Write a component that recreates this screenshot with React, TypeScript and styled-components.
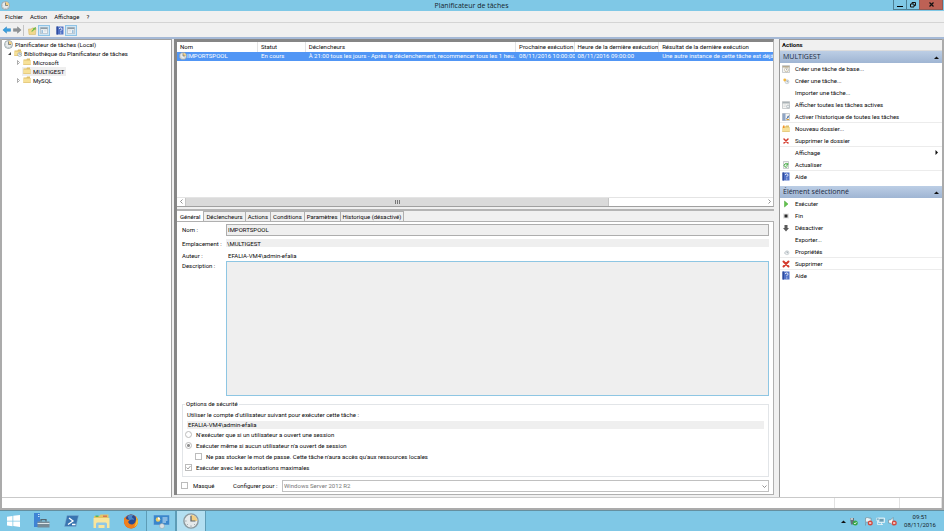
import React from "react";
import styled, { createGlobalStyle, css } from "styled-components";

const Global = createGlobalStyle`
  *, *::before, *::after { box-sizing: border-box; }
  html, body { margin: 0; padding: 0; }
  body { background: #f0f0f0; color: #080808; font: 6px/9px Roboto, "Open Sans", sans-serif; }
  button, input, select, textarea { font: inherit; color: inherit; margin: 0; padding: 0; border-radius: 0; }
  button { background: none; border: 0; }
  svg { display: block; flex: none; }
`;

/* ---------- frame ---------- */

const Screen = styled.div`
  display: flex;
  flex-direction: column;
  height: 100vh;
  min-height: 480px;
  overflow: hidden;
`;

const TitleBar = styled.header`
  display: grid;
  grid-template-columns: 1fr auto 1fr;
  height: 11px;
  flex: none;
  padding: 0 1px 0 0;
  background: #7fc8e6;
  svg { margin-left: 1px; margin-top: 1px; }
`;

const Title = styled.h1`
  margin: 0;
  font-family: "Open Sans", sans-serif;
  font-size: 7px;
  font-weight: 400;
  line-height: 12px;
  color: #16242b;
`;

const WindowButtons = styled.div`
  display: flex;
  justify-self: end;
  height: 10px;
`;

const WindowButton = styled.button<{ $close?: boolean }>`
  display: grid;
  place-items: center;
  width: ${(p) => (p.$close ? 24 : 14)}px;
  border: 1px solid #4d7f94;
  border-top: 0;
  margin-left: -1px;
  background: ${(p) => (p.$close ? "#bd6155" : "transparent")};
  ${(p) => p.$close && css`border-color: #8e5a55;`}
  svg { margin: 0; }
`;

const MenuBar = styled.nav`
  display: flex;
  align-items: flex-start;
  gap: 7px;
  flex: none;
  height: 12px;
  padding: 1px 5px 0;
  border-bottom: 1px solid #d4d4d4;
`;

const ToolBar = styled.div`
  display: flex;
  align-items: center;
  flex: none;
  height: 14px;
  padding: 0 1px;
`;

const ToolButton = styled.button<{ $on?: boolean }>`
  display: grid;
  place-items: center;
  width: ${(p) => (p.$on ? 12 : 11)}px;
  height: 11px;
  border: 1px solid ${(p) => (p.$on ? "#8fc3e6" : "transparent")};
  background: ${(p) => (p.$on ? "#cfe6f5" : "transparent")};
`;

const ToolDivider = styled.span<{ $clear?: boolean }>`
  width: 1px;
  height: 11px;
  background: ${(p) => (p.$clear ? "transparent" : "#c4c4c4")};
  & + button { margin-left: 3px; }
`;

const Body = styled.main`
  display: grid;
  grid-template-columns: minmax(120px, 170fr) minmax(380px, 603fr) minmax(130px, 163fr);
  column-gap: 2px;
  flex: 1;
  min-height: 0;
  padding: 0 2px;
  border-top: 2px solid #a5b9d6;
  background: linear-gradient(90deg, #ababab 2px, #f0f0f0 2px, #f0f0f0 calc(100% - 2px), #ababab calc(100% - 2px));
`;

const StatusBar = styled.footer`
  display: grid;
  grid-template-columns: 1fr 65px 42px;
  flex: none;
  height: 13px;
  padding-top: 1px;
  border: solid #ababab;
  border-width: 0 2px 2px;
  background: #c9c9c9;
`;

const StatusCell = styled.span`
  background: #fff;
  border-right: 1px solid #e2e2e2;
`;

/* ---------- tree ---------- */

const TreePanel = styled.aside`
  background: #fff;
  border: solid #a0a0a0;
  border-width: 1px 1px 0 0;
  min-width: 0;
`;

const Tree = styled.ul`
  list-style: none;
  margin: 0;
  padding: 0;
`;

const TreeRow = styled.li<{ $level: number }>`
  display: flex;
  align-items: center;
  height: 9px;
  line-height: 7px;
  padding-left: ${(p) => [1, 4, 13][p.$level]}px;
`;

const Toggle = styled.button`
  display: grid;
  place-items: center;
  width: 6px;
  height: 9px;
  margin-right: 1px;
`;

const TreeLabel = styled.span<{ $selected?: boolean }>`
  display: flex;
  align-items: center;
  gap: 2px;
  height: 9px;
  padding: 0 2px 1px 1px;
  white-space: nowrap;
  background: ${(p) => (p.$selected ? "#efefef" : "transparent")};
`;

/* ---------- task list ---------- */

const Center = styled.section`
  display: flex;
  flex-direction: column;
  min-width: 0;
  min-height: 0;
  border-left: 3px solid #868686;
  margin: 0 3px 2px 0;
`;

const ListPane = styled.div`
  display: flex;
  flex-direction: column;
  flex: 166 1 0;
  min-height: 0;
  border: solid #868686;
  border-width: 3px 1px 1px 0;
  border-bottom-color: #a0a0a0;
  border-right-color: #b4b4b4;
  background: #fff;
`;

const ListScroll = styled.div`
  flex: 1;
  min-height: 0;
  overflow: hidden;
`;

const TaskTable = styled.table`
  width: 100%;
  table-layout: fixed;
  border-collapse: separate;
  border-spacing: 0;
  th, td {
    padding: 0 0 1px 3px;
    line-height: 8px;
    text-align: left;
    font-weight: 400;
    white-space: nowrap;
    overflow: hidden;
  }
  th { height: 10px; border-right: 1px solid #e3e3e3; }
  th:last-child { border-right: 0; }
  td { height: 9px; background: #5196f5; color: #fff; }
  td:first-child { padding-left: 2px; }
`;

const Col = styled.col<{ $w?: number }>`
  width: ${(p) => (p.$w ? `${p.$w}%` : "auto")};
`;

const TaskName = styled.span`
  display: flex;
  align-items: center;
`;

const ScrollBar = styled.div`
  display: grid;
  grid-template-columns: 8px 424fr 156fr 8px;
  height: 9px;
  flex: none;
  border-top: 1px solid #e4e4e4;
  button { display: grid; place-items: center; background: #fff; }
`;

const Thumb = styled.span`
  display: grid;
  place-items: center;
  background: #dadada;
  border: solid #c6c6c6;
  border-width: 0 1px;
`;

/* ---------- details ---------- */

const DetailPane = styled.div`
  display: flex;
  flex-direction: column;
  flex: 288 1 0;
  min-height: 0;
  margin-top: 2px;
  border-top: 2px solid #b4b4b4;
`;

const Tabs = styled.div`
  display: flex;
  align-items: flex-end;
  flex: none;
  height: 10px;
`;

const Tab = styled.button<{ $active?: boolean }>`
  height: ${(p) => (p.$active ? 11 : 10)}px;
  padding: 0 ${(p) => (p.$active ? 3 : 2)}px;
  border: solid #b0b0b0;
  border-width: ${(p) => (p.$active ? "0 1px 0 0" : "1px 1px 0 0")};
  background: ${(p) => (p.$active ? "#fff" : "#f0f0f0")};
  line-height: 9px;
  margin-bottom: ${(p) => (p.$active ? -1 : 0)}px;
  white-space: nowrap;
`;

const TabPage = styled.form`
  display: flex;
  flex-direction: column;
  flex: 1;
  min-height: 0;
  padding: 2px 4px 2px 5px;
  background: #fff;
  border: solid #b0b0b0;
  border-width: 1px 1px 1px 0;
`;

const Fields = styled.div`
  display: grid;
  grid-template-columns: 44px 1fr;
  grid-template-rows: 12px 15px 10px 1fr;
  flex: 1;
  min-height: 0;
  label { align-self: center; white-space: nowrap; }
  label:last-of-type { align-self: start; }
`;

const TextField = styled.input<{ $kind: "box" | "band" | "plain" }>`
  width: 100%;
  min-width: 0;
  height: ${(p) => (p.$kind === "box" ? 12 : 8)}px;
  align-self: center;
  padding: 0 1px;
  border: ${(p) => (p.$kind === "box" ? "1px solid #adadad" : "0")};
  background: ${(p) => (p.$kind === "plain" ? "#fff" : "#efefef")};
  ${(p) => p.$kind === "plain" && css`padding-left: 2px;`}
`;

const Description = styled.textarea`
  width: 100%;
  height: 100%;
  resize: none;
  border: 1px solid #8ec6e3;
  background: #efefef;
`;

const Security = styled.fieldset`
  flex: none;
  min-width: 0;
  margin: 4px 0 0;
  padding: 2px 4px 3px 4px;
  border: 1px solid #e2e5e8;
  legend { padding: 0 1px; margin-left: -2px; line-height: 8px; }
  p { margin: 0; line-height: 10px; }
`;

const Option = styled.label<{ $indent?: boolean }>`
  display: flex;
  align-items: center;
  gap: 4px;
  height: 11px;
  padding-left: ${(p) => (p.$indent ? 10 : 0)}px;
  white-space: nowrap;
  margin-left: -2px;
`;

const Radio = styled.input.attrs({ type: "radio" })`
  appearance: none;
  width: 7px;
  height: 7px;
  border: 1px solid #bcbcbc;
  border-radius: 50%;
  &:checked { background: radial-gradient(circle, #8f8f8f 1px, #fff 2px); }
`;

const CheckBox = styled.input.attrs({ type: "checkbox" })`
  appearance: none;
  width: 7px;
  height: 7px;
  border: 1px solid #bcbcbc;
  background: #fff;
`;

const CheckHolder = styled.span`
  display: grid;
  width: 7px;
  height: 7px;
  > * { grid-area: 1 / 1; }
  svg { pointer-events: none; }
`;

const BottomRow = styled.div`
  display: flex;
  align-items: center;
  flex: none;
  margin-top: 3px;
  line-height: 7px;
  label { white-space: nowrap; padding-bottom: 1px; }
`;

const HiddenOption = styled.label`
  display: flex;
  align-items: center;
  gap: 5px;
  width: 52px;
  margin-left: -1px;
`;

const ConfigLabel = styled.label`
  width: 45px;
`;

const SelectHolder = styled.span`
  display: grid;
  flex: 1;
  align-items: center;
  margin-left: 4px;
  > * { grid-area: 1 / 1; }
  svg { justify-self: end; margin-right: 2px; pointer-events: none; }
`;

const Select = styled.select`
  appearance: none;
  width: 100%;
  height: 12px;
  padding: 0 0 1px 1px;
  border: 1px solid #c0c0c0;
  background: #fff;
  color: #777;
  opacity: 1;
`;

/* ---------- actions ---------- */

const ActionsPanel = styled.aside`
  min-width: 0;
  overflow: hidden;
  background: #fff;
  border: solid #9a9a9a;
  border-width: 1px 0 0 1px;
`;

const ActionsTitle = styled.h2`
  margin: 0;
  height: 11px;
  padding-left: 2px;
  font-size: 6px;
  font-weight: 700;
  line-height: 10px;
  background: #f0f0f0;
  border-bottom: 1px solid #dcdcdc;
`;

const GroupHead = styled.button`
  display: flex;
  align-items: center;
  justify-content: space-between;
  width: 100%;
  height: 12px;
  padding: 0 3px;
  background: linear-gradient(#bccee5, #9fb5d3);
  font-family: "Open Sans", sans-serif;
  font-size: 7px;
  line-height: 12px;
  color: #1a2940;
`;

const ActionList = styled.ul`
  list-style: none;
  margin: 0 0 3px;
  padding: 0;
`;

const ActionItem = styled.li<{ $line?: boolean }>`
  border-bottom: 1px solid ${(p) => (p.$line ? "#ececec" : "transparent")};
  height: 12px;
`;

const ActionButton = styled.button`
  display: grid;
  grid-template-columns: 9px 1fr auto;
  column-gap: 4px;
  align-items: center;
  width: 100%;
  height: 11px;
  padding: 0 3px 0 2px;
  text-align: left;
  white-space: nowrap;
`;

/* ---------- taskbar ---------- */

const TaskBar = styled.nav`
  display: flex;
  align-items: stretch;
  justify-content: space-between;
  flex: none;
  height: 21px;
  background: #7fc8e6;
  border-top: 1px solid #648f9f;
`;

const Apps = styled.div`
  display: flex;
`;

const AppButton = styled.button<{ $state?: "open" | "active" }>`
  display: grid;
  place-items: center;
  width: 30px;
  border: solid transparent;
  border-width: 0 1px;
  ${(p) => p.$state && css`border-color: #5d9cb6;`}
  background: ${(p) => (p.$state === "active" ? "#b3dff1" : p.$state === "open" ? "#88cce8" : "none")};
  &:first-child { width: 26px; }
`;

const Tray = styled.div`
  display: flex;
  align-items: center;
  gap: 3px;
  padding-right: 8px;
`;

const TrayGroup = styled.span`
  display: flex;
  gap: 3px;
  margin-left: 3px;
`;

const Clock = styled.time`
  margin-left: 4px;
  text-align: center;
  line-height: 8px;
  color: #16242b;
`;

/* ---------- icons ---------- */

const ClockIcon = ({ size = 9 }: { size?: number }) => (
  <svg width={size} height={size} viewBox="0 0 18 18">
    <circle cx="9" cy="9" r="8" fill="#e6eaeb" stroke="#8d9a9f" strokeWidth="1.6" />
    <path d="M9 9V2a7 7 0 0 1 7 7z" fill="#f2cf84" />
    <path d="M9 3v6h5" fill="none" stroke="#5b656a" strokeWidth="1.4" />
    <path d="M9 14v1.6M2.5 9H4M4.400 13.600l1-1M13.600 13.600l-1-1" stroke="#8c999e" />
  </svg>
);

const FolderIcon = ({ clock, sun }: { clock?: boolean; sun?: boolean }) => (
  <svg width="8" height="8" viewBox="0 0 16 16">
    <path d="M1 3h6l1-2h6v3h1v10H1z" fill="#dfc06b" />
    <path d="M1 5h14v9H1z" fill="#f7e198" />
    <path d="M1 13h14v1H1z" fill="#d6b76a" />
    {clock && <><circle cx="11.500" cy="11" r="4" fill="#eef2f5" stroke="#7990a0" /><path d="M11.500 8.500V11h2" stroke="#4e5d68" fill="none" /></>}
    {sun && <path d="M2 1h3v5H2z" fill="#f3932a" />}
  </svg>
);

const HelpIcon = () => (
  <svg width="8" height="9" viewBox="0 0 16 18">
    <path d="M1 1h14v16H1z" fill="#4f70c6" />
    <path d="M1 1h3v16H1z" fill="#2f4b9c" />
    <path d="M6.500 6c0-3 5.500-3 5.500 0 0 2-2.500 2-2.500 4.500M9.500 13v2" fill="none" stroke="#fff" strokeWidth="1.800" />
  </svg>
);

const ArrowIcon = ({ right }: { right?: boolean }) => (
  <svg width="9" height="8" viewBox="0 0 20 16">
    {right
      ? <path d="M1 5h9V1l8 7-8 7v-4H1z" fill="#8f9396" stroke="#74787b" />
      : <path d="M19 5h-9V1L2 8l8 7v-4h9z" fill="#3aa0e0" stroke="#2580bd" />}
  </svg>
);

const PaneIcon = ({ mark }: { mark: "left" | "right" }) => (
  <svg width="8" height="7" viewBox="0 0 18 16">
    <path d="M1 1h16v14H1z" fill="#f8fafb" stroke="#8b98a1" />
    <path d="M1 1h16v4H1z" fill="#8f9ca6" />
    <path d={mark === "left" ? "M3 7h4v7H3z" : "M11 7h4v7h-4z"} fill="#9cbfd9" />
    <path d={mark === "left" ? "M9 8h6M9 11h6" : "M3 8h6M3 11h6"} stroke="#b8c1c7" />
  </svg>
);

const UpFolderIcon = () => (
  <svg width="9" height="9" viewBox="0 0 18 18">
    <path d="M1 6h6l1-2h8l-1 13H2z" fill="#f0d88d" stroke="#cfb05d" />
    <path d="M6 11l4-4V5l6-3-1 6-2-1-4 4z" fill="#68b94a" />
  </svg>
);

const CrossIcon = ({ bold }: { bold?: boolean }) => (
  <svg width="8" height="8" viewBox="0 0 16 16">
    <path d={bold ? "M3 3l10 10M13 3L3 13" : "M4 4l8 8M12 4l-8 8"} stroke="#d43a2c" strokeWidth={bold ? 4 : 3} strokeLinecap="round" />
  </svg>
);

const SheetIcon = ({ kind }: { kind: "new" | "view" | "log" | "refresh" }) => (
  <svg width="8" height="8" viewBox="0 0 16 16">
    <path d={kind === "refresh" ? "M3 1h10v14H3z" : "M1 1h14v14H1z"} fill="#f4f4f2" stroke="#9da3a6" />
    {kind === "new" && <><path d="M1 2h14v3H1z" fill="#b6aa91" /><circle cx="9" cy="9.500" r="4" fill="#fff" stroke="#a69870" /><path d="M9 7v3h2" fill="none" stroke="#777" /></>}
    {kind === "view" && <><path d="M1 2h14v3H1z" fill="#aab2b6" /><circle cx="12" cy="11" r="3" fill="#e9eef0" stroke="#8f999e" /><path d="M3 8h5M3 11h4" stroke="#c3c9cc" /></>}
    {kind === "log" && <><path d="M1 1h6v14H1z" fill="#8fa5c5" /><path d="M9 12l5-7M10 8h4" stroke="#5577aa" strokeWidth="2" /><path d="M9 13h5" stroke="#d59d3c" strokeWidth="2" /></>}
    {kind === "refresh" && <path d="M11 7a3.500 3.500 0 1 0 0 3.500M11.500 4v4H8" fill="none" stroke="#43ad43" strokeWidth="2" />}
  </svg>
);

const TaskIcon = ({ grey }: { grey?: boolean }) => (
  <svg width="8" height="8" viewBox="0 0 16 16">
    <circle cx="10" cy="9.500" r="4" fill="#edf1f3" stroke={grey ? "#adb4b8" : "#a6b2bb"} />
    <path d="M10 6.500v3h2.500" fill="none" stroke="#6d7b85" />
    <circle cx="5.500" cy={grey ? 10 : 6} r={grey ? 1.5 : 2.8} fill={grey ? "#c8cdd0" : "#f2b640"} />
  </svg>
);

const PlayIcon = () => (
  <svg width="8" height="8" viewBox="0 0 16 16"><path d="M5 2l7 6-7 6z" fill="#62c34d" stroke="#48a537" /></svg>
);
const StopIcon = () => (
  <svg width="8" height="8" viewBox="0 0 16 16"><path d="M2 3h12v10H2z" fill="#e3e3e3" /><path d="M5 5h6v6H5z" fill="#2b2b2b" /></svg>
);
const DownIcon = () => (
  <svg width="8" height="8" viewBox="0 0 16 16"><path d="M5 2h6v6h3l-6 7-6-7h3z" fill="#5b5b5b" /></svg>
);

const Triangle = ({ dir }: { dir: "up" | "right" }) => (
  <svg width="5" height="5" viewBox="0 0 10 10">
    <path d={dir === "up" ? "M0 8l5-5 5 5z" : "M3 0l5 5-5 5z"} fill="#111" />
  </svg>
);

const Chevron = ({ dir }: { dir: "left" | "right" | "down" }) => (
  <svg width="5" height="5" viewBox="0 0 10 10">
    <path d={{ left: "M7 1L3 5l4 4", right: "M3 1l4 4-4 4", down: "M1 3l4 4 4-4" }[dir]} fill="none" stroke="#777" strokeWidth="1.600" />
  </svg>
);

const TreeArrow = ({ open }: { open?: boolean }) => (
  <svg width="5" height="5" viewBox="0 0 10 10">
    {open ? <path d="M8 2v6H2z" fill="#444" /> : <path d="M3 1l4 4-4 4z" fill="#fff" stroke="#8a8a8a" strokeWidth="1.400" />}
  </svg>
);

const StartIcon = () => (
  <svg width="13" height="12" viewBox="0 0 26 24">
    <path d="M0 3.500l11-1.600v9.600H0zM12.500 1.700L26 0v11.500H12.500zM0 13h11v9.500L0 21zM12.500 13H26v11l-13.500-1.800z" fill="#fff" />
  </svg>
);
const ServerIcon = () => (
  <svg width="17" height="16" viewBox="0 0 34 32">
    <path d="M2 0h12v28H2z" fill="#3f83d4" /><path d="M10 3h3M10 7h3" stroke="#c6e0f7" strokeWidth="2" />
    <path d="M9 17h24v12H9z" fill="#768a96" /><path d="M16 17v-4h10v4" fill="none" stroke="#54656f" strokeWidth="2.500" />
    <path d="M9 21h24" stroke="#dce6ea" strokeWidth="2" />
  </svg>
);
const ShellIcon = () => (
  <svg width="15" height="12" viewBox="0 0 30 24">
    <path d="M6 1h23l-5 22H1z" fill="#3975b1" stroke="#7faed3" />
    <path d="M10 6l8 6-10 7M16 19h7" fill="none" stroke="#fff" strokeWidth="2.600" />
  </svg>
);
const ExplorerIcon = () => (
  <svg width="17" height="15" viewBox="0 0 34 30">
    <path d="M2 4h11l2-3h16v26H2z" fill="#e5c464" /><path d="M5 3h6v3H5z" fill="#5bb65a" /><path d="M20 3h8v3h-8z" fill="#d77652" />
    <path d="M1 8h32v20H1z" fill="#f8e59c" /><path d="M6 29v-9q0-3 3-3h16q3 0 3 3v9h-5v-7H11v7z" fill="#8ec7e6" />
  </svg>
);
const FirefoxIcon = () => (
  <svg width="16" height="15" viewBox="0 0 32 30">
    <circle cx="16" cy="15" r="14" fill="#dd5a1b" /><circle cx="16" cy="11.500" r="10.500" fill="#284b92" />
    <path d="M9 4q6-4 12-2-4 2-3 5 4 1 4 5-5-2-9 1-3-4-4-9z" fill="#4a86c8" />
    <path d="M2 7q4 1 6 4l5 1-3 4q3 6 9 5 6-2 7-10l3 5q-1 11-12 13Q4 28 2 16z" fill="#ef7f1d" />
    <path d="M26 5q6 7 3 15-3 5-7 6 6-8 4-21z" fill="#f8c336" />
  </svg>
);
const ControlIcon = () => (
  <svg width="17" height="15" viewBox="0 0 34 30">
    <path d="M1 2h32v20H1z" fill="#3a86cb" stroke="#9bc8e8" />
    <circle cx="10" cy="11" r="4.500" fill="#f0ce65" /><path d="M10 11V6.500a4.500 4.500 0 0 1 4.500 4.500z" fill="#fff" />
    <path d="M19 8h10M19 12h10M19 16h7" stroke="#d5ecfa" strokeWidth="2" />
    <circle cx="18" cy="24" r="5" fill="#dbe1e4" stroke="#8c9ca5" />
  </svg>
);

const TrayIcon = ({ kind }: { kind: "usb" | "flag" | "net" | "sound" }) => (
  <svg width="9" height="9" viewBox="0 0 18 18">
    {kind === "usb" && <><path d="M2 2h8v13H4z" fill="#65717a" /><path d="M3 2h5v4H3z" fill="#c0c8cc" /><circle cx="12.500" cy="12" r="5" fill="#38a84b" /><path d="M10 12l2 2 3-4" fill="none" stroke="#fff" strokeWidth="1.500" /></>}
    {kind === "flag" && <path d="M3 17V2q4-2 7 0 2 1 4 0v8q-4 1-6 0H4" fill="#e9f2f6" stroke="#60717a" />}
    {kind === "net" && <><path d="M5 2h12v9H5z" fill="#a9d7e9" stroke="#f0f7fa" strokeWidth="1.500" /><path d="M1 2h5v5H1z" fill="#7fb4ca" stroke="#f0f7fa" /><path d="M3 7v8h11M11 11v4" fill="none" stroke="#eef6f9" strokeWidth="1.500" /><path d="M7 4h8v5H7z" fill="#6f9db1" /></>}
    {kind === "sound" && <path d="M1 6h4l5-5v16l-5-5H1z" fill="#f4f8fa" stroke="#60717a" />}
    {(kind === "flag" || kind === "sound") && <><circle cx="12.500" cy="12" r="5" fill="#d2493e" /><path d="M10.500 10l4 4M14.500 10l-4 4" stroke="#fff" strokeWidth="1.500" /></>}
  </svg>
);

/* ---------- data ---------- */

type Action = { label: string; icon?: React.ReactNode; line?: boolean; more?: boolean };

const folderActions: Action[] = [
  { label: "Créer une tâche de base...", icon: <SheetIcon kind="new" /> },
  { label: "Créer une tâche...", icon: <TaskIcon /> },
  { label: "Importer une tâche..." },
  { label: "Afficher toutes les tâches actives", icon: <SheetIcon kind="view" /> },
  { label: "Activer l'historique de toutes les tâches", icon: <SheetIcon kind="log" />, line: true },
  { label: "Nouveau dossier...", icon: <FolderIcon sun /> },
  { label: "Supprimer le dossier", icon: <CrossIcon />, line: true },
  { label: "Affichage", more: true },
  { label: "Actualiser", icon: <SheetIcon kind="refresh" />, line: true },
  { label: "Aide", icon: <HelpIcon /> },
];

const itemActions: Action[] = [
  { label: "Exécuter", icon: <PlayIcon /> },
  { label: "Fin", icon: <StopIcon /> },
  { label: "Désactiver", icon: <DownIcon /> },
  { label: "Exporter..." },
  { label: "Propriétés", icon: <TaskIcon grey />, line: true },
  { label: "Supprimer", icon: <CrossIcon bold />, line: true },
  { label: "Aide", icon: <HelpIcon /> },
];

const columns = [
  { label: "Nom", w: 13.6 },
  { label: "Statut", w: 8 },
  { label: "Déclencheurs", w: 35.3 },
  { label: "Prochaine exécution", w: 9.8 },
  { label: "Heure de la dernière exécution", w: 14.2 },
  { label: "Résultat de la dernière exécution" },
];

const tabs = ["Général", "Déclencheurs", "Actions", "Conditions", "Paramètres", "Historique (désactivé)"];

const ActionGroup = ({ title, items }: { title: string; items: Action[] }) => (
  <>
    <GroupHead>{title}<Triangle dir="up" /></GroupHead>
    <ActionList>
      {items.map((a) => (
        <ActionItem key={a.label} $line={a.line}>
          <ActionButton>
            <span>{a.icon}</span>
            {a.label}
            {a.more && <Triangle dir="right" />}
          </ActionButton>
        </ActionItem>
      ))}
    </ActionList>
  </>
);

export default function App() {
  return (
    <Screen>
      <Global />
      <TitleBar>
        <ClockIcon />
        <Title>Planificateur de tâches</Title>
        <WindowButtons>
          <WindowButton aria-label="Réduire"><svg width="6" height="6" viewBox="0 0 6 6"><path d="M0 4h6v1H0z" /></svg></WindowButton>
          <WindowButton aria-label="Restaurer"><svg width="6" height="6" viewBox="0 0 12 12"><path d="M1 4h7v6H1zM4 4V1h7v6H8" fill="none" stroke="#111" strokeWidth="2" /></svg></WindowButton>
          <WindowButton $close aria-label="Fermer"><svg width="5" height="5" viewBox="0 0 10 10"><path d="M1 1l8 8M9 1L1 9" stroke="#111" strokeWidth="2.400" /></svg></WindowButton>
        </WindowButtons>
      </TitleBar>
      <MenuBar>
        {["Fichier", "Action", "Affichage", "?"].map((m) => <button key={m}>{m}</button>)}
      </MenuBar>
      <ToolBar>
        <ToolButton aria-label="Précédent"><ArrowIcon /></ToolButton>
        <ToolButton aria-label="Suivant"><ArrowIcon right /></ToolButton>
        <ToolDivider />
        <ToolButton aria-label="Niveau supérieur"><UpFolderIcon /></ToolButton>
        <ToolButton $on aria-label="Arborescence"><PaneIcon mark="left" /></ToolButton>
        <ToolDivider $clear />
        <ToolButton aria-label="Aide"><HelpIcon /></ToolButton>
        <ToolButton $on aria-label="Volet Actions"><PaneIcon mark="right" /></ToolButton>
      </ToolBar>

      <Body>
        <TreePanel>
          <Tree>
            <TreeRow $level={0}><TreeLabel><ClockIcon />Planificateur de tâches (Local)</TreeLabel></TreeRow>
            <TreeRow $level={1}>
              <Toggle aria-label="Replier"><TreeArrow open /></Toggle>
              <TreeLabel><FolderIcon clock />Bibliothèque du Planificateur de tâches</TreeLabel>
            </TreeRow>
            {["Microsoft", "MULTIGEST", "MySQL"].map((name) => (
              <TreeRow key={name} $level={2}>
                <Toggle aria-label={name}>{name !== "MULTIGEST" && <TreeArrow />}</Toggle>
                <TreeLabel $selected={name === "MULTIGEST"}><FolderIcon />{name}</TreeLabel>
              </TreeRow>
            ))}
          </Tree>
        </TreePanel>

        <Center>
          <ListPane>
            <ListScroll>
              <TaskTable>
                <colgroup>{columns.map((c) => <Col key={c.label} $w={c.w} />)}</colgroup>
                <thead><tr>{columns.map((c) => <th key={c.label}>{c.label}</th>)}</tr></thead>
                <tbody>
                  <tr>
                    <td><TaskName><ClockIcon size={8} />IMPORTSPOOL</TaskName></td>
                    <td>En cours</td>
                    <td>À 21:00 tous les jours - Après le déclenchement, recommencer tous les 1 heu...</td>
                    <td>08/11/2016 10:00:00</td>
                    <td>08/11/2016 09:00:00</td>
                    <td>Une autre instance de cette tâche est déjà e</td>
                  </tr>
                </tbody>
              </TaskTable>
            </ListScroll>
            <ScrollBar>
              <button aria-label="Défiler à gauche"><Chevron dir="left" /></button>
              <Thumb><svg width="5" height="4" viewBox="0 0 5 4"><path d="M0 0h1v4H0zM2 0h1v4H2zM4 0h1v4H4z" fill="#777" /></svg></Thumb>
              <span />
              <button aria-label="Défiler à droite"><Chevron dir="right" /></button>
            </ScrollBar>
          </ListPane>

          <DetailPane>
            <Tabs role="tablist">
              {tabs.map((t, i) => <Tab key={t} role="tab" aria-selected={i === 0} $active={i === 0}>{t}</Tab>)}
            </Tabs>
            <TabPage onSubmit={(e) => e.preventDefault()}>
              <Fields>
                <label htmlFor="nom">Nom :</label>
                <TextField id="nom" $kind="box" readOnly value="IMPORTSPOOL" />
                <label htmlFor="lieu">Emplacement :</label>
                <TextField id="lieu" $kind="band" readOnly value="\MULTIGEST" />
                <label htmlFor="auteur">Auteur :</label>
                <TextField id="auteur" $kind="plain" readOnly value="EFALIA-VM4\admin-efalia" />
                <label htmlFor="desc">Description :</label>
                <Description id="desc" readOnly />
              </Fields>
              <Security>
                <legend>Options de sécurité</legend>
                <p><label htmlFor="compte">Utiliser le compte d'utilisateur suivant pour exécuter cette tâche :</label></p>
                <TextField id="compte" $kind="band" readOnly value="EFALIA-VM4\admin-efalia" />
                <Option><Radio name="session" disabled />N'exécuter que si un utilisateur a ouvert une session</Option>
                <Option><Radio name="session" disabled defaultChecked />Exécuter même si aucun utilisateur n'a ouvert de session</Option>
                <Option $indent><CheckBox disabled />Ne pas stocker le mot de passe. Cette tâche n'aura accès qu'aux ressources locales</Option>
                <Option>
                  <CheckHolder>
                    <CheckBox disabled defaultChecked />
                    <svg width="7" height="7" viewBox="0 0 14 14"><path d="M3 7l3 3 5-6" fill="none" stroke="#8a8a8a" strokeWidth="1.600" /></svg>
                  </CheckHolder>
                  Exécuter avec les autorisations maximales
                </Option>
              </Security>
              <BottomRow>
                <HiddenOption><CheckBox disabled />Masqué</HiddenOption>
                <ConfigLabel htmlFor="config">Configurer pour :</ConfigLabel>
                <SelectHolder>
                  <Select id="config" disabled><option>Windows Server 2012 R2</option></Select>
                  <Chevron dir="down" />
                </SelectHolder>
              </BottomRow>
            </TabPage>
          </DetailPane>
        </Center>

        <ActionsPanel>
          <ActionsTitle>Actions</ActionsTitle>
          <ActionGroup title="MULTIGEST" items={folderActions} />
          <ActionGroup title="Élément sélectionné" items={itemActions} />
        </ActionsPanel>
      </Body>

      <StatusBar><StatusCell /><StatusCell /><StatusCell /></StatusBar>

      <TaskBar>
        <Apps>
          <AppButton aria-label="Démarrer"><StartIcon /></AppButton>
          <AppButton aria-label="Gestionnaire de serveur"><ServerIcon /></AppButton>
          <AppButton aria-label="PowerShell"><ShellIcon /></AppButton>
          <AppButton aria-label="Explorateur"><ExplorerIcon /></AppButton>
          <AppButton aria-label="Firefox"><FirefoxIcon /></AppButton>
          <AppButton $state="open" aria-label="Outils"><ControlIcon /></AppButton>
          <AppButton $state="active" aria-label="Planificateur de tâches"><ClockIcon size={16} /></AppButton>
        </Apps>
        <Tray>
          <Triangle dir="up" />
          <TrayIcon kind="usb" />
          <TrayGroup>
            <TrayIcon kind="flag" />
            <TrayIcon kind="net" />
            <TrayIcon kind="sound" />
          </TrayGroup>
          <Clock>09:51<br />08/11/2016</Clock>
        </Tray>
      </TaskBar>
    </Screen>
  );
}
